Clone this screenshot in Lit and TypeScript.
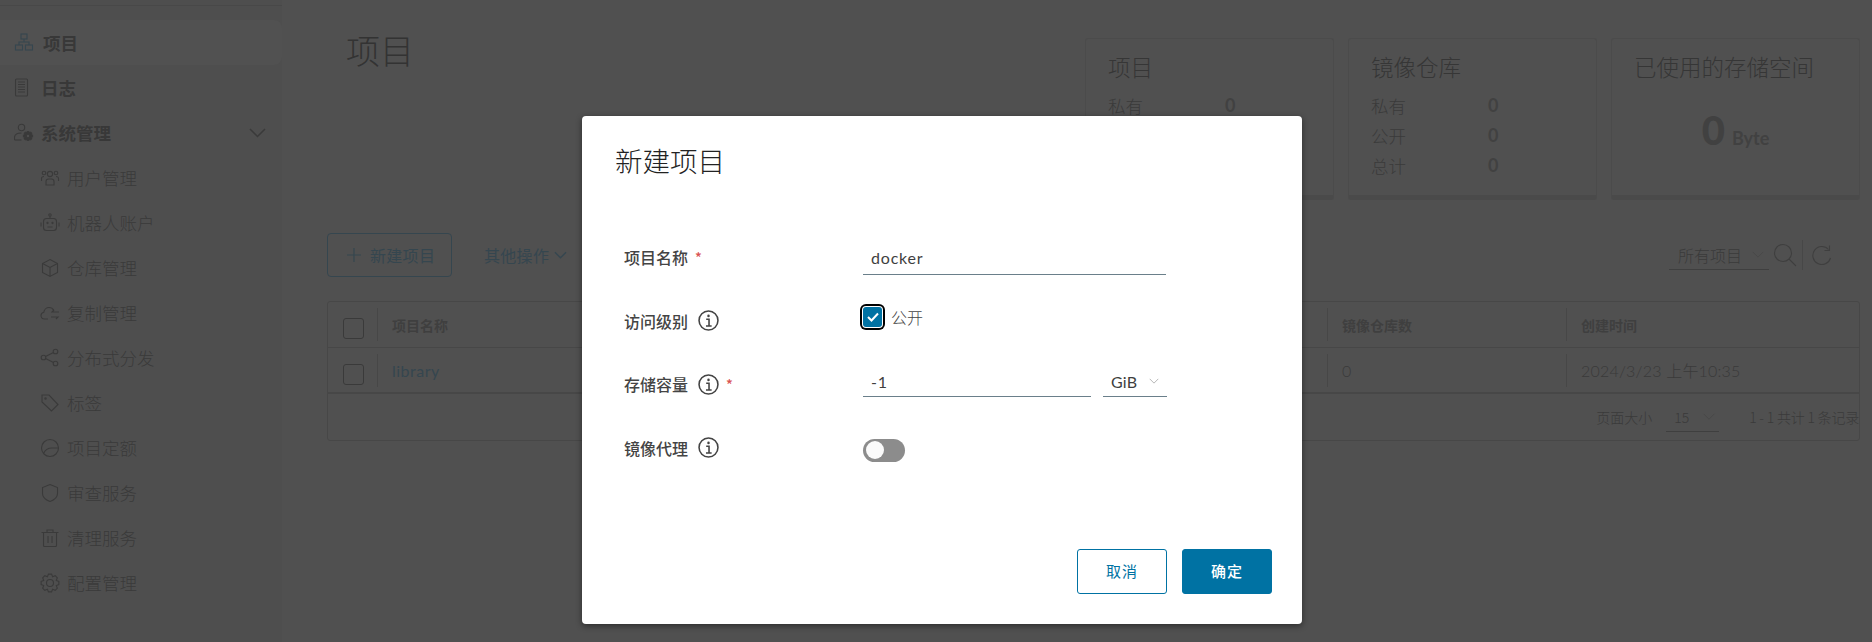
import { LitElement, css, html, svg } from 'lit';
import { customElement } from 'lit/decorators.js';

// gear outline, used by the admin and config icons
function gearPath(cx: number, cy: number, outer: number, inner: number, teeth: number) {
    let d = '';
    const step = (Math.PI * 2) / teeth;
    for (let i = 0; i < teeth; i++) {
        const a = i * step;
        const pts = [
            [inner, a - step * 0.5],
            [outer, a - step * 0.22],
            [outer, a + step * 0.22],
        ];
        for (const [r, t] of pts) {
            const x = (cx + r * Math.cos(t)).toFixed(2);
            const y = (cy + r * Math.sin(t)).toFixed(2);
            d += (d ? 'L' : 'M') + x + ' ' + y;
        }
    }
    return d + 'Z';
}

const ICONS: Record<string, unknown> = {
    project: svg`<rect x="7" y="1" width="6" height="5"/><rect x="1.5" y="12" width="7" height="5"/><rect x="11.5" y="12" width="7" height="5"/><path d="M10 6v3M5 12V9h10v3"/>`,
    log: svg`<rect x="1.5" y="1" width="12" height="17" rx="1"/><path d="M4 4h7M4 6.5h7M4 9h7M4 11.5h7M4 14h7"/>`,
    admin: svg`<circle cx="7.5" cy="4.5" r="3.2"/><path d="M0.5 17v-2.5c0-3 3-4.5 7-4.5"/><path d="M0.5 17h7"/><path d="${gearPath(14, 13, 4.6, 3.2, 8)}" fill="currentColor"/><circle cx="14" cy="13" r="1.2" fill="#4e4e4e" stroke="none"/>`,
    users: svg`<circle cx="10" cy="6" r="2.6"/><path d="M6 17v-3.5c0-1.5 1-2.5 2.5-2.5h3c1.5 0 2.5 1 2.5 2.5V17z"/><circle cx="4" cy="5" r="1.8"/><circle cx="16" cy="5" r="1.8"/><path d="M1.5 13v-2.5C1.5 9 2.5 8.5 4 8.5M18.5 13v-2.5C18.5 9 17.5 8.5 16 8.5"/>`,
    robot: svg`<circle cx="10" cy="2" r="1.2"/><path d="M10 3.2V5.5"/><rect x="3.5" y="5.5" width="13" height="12" rx="3"/><path d="M7.5 14h5M1 9.5v4M19 9.5v4"/><circle cx="7.5" cy="10" r=".6"/><circle cx="12.5" cy="10" r=".6"/>`,
    box: svg`<path d="M10 1.5l7.5 4v9L10 18.5l-7.5-4v-9zM2.5 5.5L10 9.5l7.5-4M10 9.5v9"/>`,
    cloud: svg`<path d="M8 16H4.5C2.5 16 1 14.5 1 12.5 1 10.8 2.2 9.5 3.8 9.2 4.2 6.5 6.5 4.5 9 4.5c2 0 3.8 1 4.7 2.8"/><path d="M19 9h-7l2-2M11 14h7l-2 2"/>`,
    share: svg`<circle cx="15.5" cy="3.5" r="2.3"/><circle cx="3.5" cy="9.5" r="2.3"/><circle cx="15.5" cy="15.5" r="2.3"/><path d="M5.5 8.5l8-4M5.5 10.5l8 4"/>`,
    tag: svg`<path d="M2 2h7l9 9.5-6.5 6.5L2 9z"/><circle cx="5.5" cy="5.5" r=".7"/>`,
    quota: svg`<circle cx="10" cy="10" r="8.5"/><path d="M3.5 15.5C5 12 8 10 12 10h6"/>`,
    shield: svg`<path d="M10 1.5l7.5 3v6c0 4-3.5 6.5-7.5 8-4-1.5-7.5-4-7.5-8v-6z"/>`,
    trash: svg`<path d="M1.5 4.5h17M7 4.5V2h6v2.5M3.5 4.5V17.5a1 1 0 0 0 1 1h11a1 1 0 0 0 1-1V4.5M8 8v7M12 8v7"/>`,
    gear: svg`<path d="${gearPath(10, 10, 9, 6.8, 8)}"/><circle cx="10" cy="10" r="3.5"/>`,
};

const CHILDREN = [
    ['users', '用户管理'],
    ['robot', '机器人账户'],
    ['box', '仓库管理'],
    ['cloud', '复制管理'],
    ['share', '分布式分发'],
    ['tag', '标签'],
    ['quota', '项目定额'],
    ['shield', '审查服务'],
    ['trash', '清理服务'],
    ['gear', '配置管理'],
];

const infoIcon = html`<svg class="info" viewBox="0 0 20 20"><circle cx="10" cy="10" r="9"/><circle cx="10" cy="5.6" r="1.2" class="dot"/><path d="M7.8 8.8H10.5V15M7.6 15.2h5.4"/></svg>`;

const chevron = () => html`<svg viewBox="0 0 14 8"><path d="M1 1l6 6 6-6"/></svg>`;

@customElement('app-root')
export class AppRoot extends LitElement {
    static styles = css`
    :host {
        display: block;
        position: relative;
        width: 1872px;
        height: 642px;
        overflow: hidden;
        background: #505050;
        color: #3a3a3a;
        font-family: "Noto Sans CJK SC", "Lato", sans-serif;
        font-weight: 300;
        --latin: "Lato", "Noto Sans CJK SC", sans-serif;
        --line: #474747;
        --teal: #35464f;
    }

    .page { display: flex; height: 642px; }

    /* sidebar */
    .side { width: 282px; flex: none; background: #4e4e4e; }
    .side-rule { height: 1px; margin: 5px 0 14px; background: #484848; }
    .nav {
        display: flex;
        align-items: center;
        height: 45px;
        font-size: 17.5px;
        white-space: nowrap;
        color: #3a3a3a;
    }
    .nav svg { width: 20px; height: 20px; flex: none; fill: none; stroke: currentColor; stroke-width: 1.1; }
    .nav.top { padding-left: 14px; gap: 7px; font-weight: 700; color: #383838; }
    .nav.top svg { color: #3a3a3a; }
    .nav.sub { padding-left: 40px; gap: 7px; }
    .nav.active { background: #515151; border-radius: 0 8px 8px 0; }
    .nav.active svg { color: var(--teal); }
    .nav.active span { margin-left: 2px; }
    .nav .toggle { width: 17px; height: 10px; margin-left: auto; margin-right: 16px; stroke-width: 1.5; }

    /* main */
    .main { flex: 1; min-width: 0; padding: 30px 12px 0 45px; }
    .head { display: flex; justify-content: space-between; align-items: flex-start; height: 203px; }
    .title { margin-left: 19px; font-size: 34px; line-height: 40px; color: #333; }
    .cards { display: flex; gap: 14px; margin-top: 8px; }
    .card {
        width: 249px;
        height: 162px;
        box-sizing: border-box;
        padding: 12px 22px 0;
        border: 1px solid #4b4b4b;
        border-bottom: 5px solid #4a4a4a;
        border-radius: 3px;
    }
    .card h3 { margin: 0 0 9px; font-size: 22.5px; line-height: 30px; font-weight: 300; color: #363636; }
    .stat { display: flex; height: 30px; align-items: center; font-size: 17.5px; }
    .stat span { width: 117px; }
    .stat b { font-family: var(--latin); font-weight: 700; font-size: 18px; color: #414141; }
    .used { display: flex; justify-content: center; align-items: baseline; gap: 7px; margin-top: 27px; font-family: var(--latin); font-weight: 700; color: #414141; }
    .used b { font-size: 40px; line-height: 44px; }
    .used span { font-size: 18px; }

    .tools { display: flex; align-items: center; height: 44px; padding-right: 28px; }
    .add {
        display: flex;
        align-items: center;
        gap: 9px;
        box-sizing: border-box;
        width: 125px;
        height: 44px;
        padding-left: 19px;
        border: 1px solid var(--teal);
        border-radius: 4px;
        font-size: 16px;
        font-weight: 400;
        letter-spacing: .3px;
        color: var(--teal);
    }
    .add svg { width: 14px; height: 14px; fill: none; stroke: currentColor; stroke-width: 1.2; }
    .more { display: flex; align-items: center; gap: 5px; margin-left: 32px; font-size: 16px; font-weight: 400; letter-spacing: .3px; color: var(--teal); }
    .more svg { width: 13px; height: 8px; fill: none; stroke: currentColor; stroke-width: 1.5; }
    .filter { display: flex; align-items: center; margin-left: auto; }
    .pick {
        display: flex;
        align-items: center;
        box-sizing: border-box;
        width: 100px;
        height: 30px;
        padding-left: 9px;
        border-bottom: 1px solid #3f3f3f;
        font-size: 16px;
    }
    .pick svg { width: 12px; height: 7px; margin-left: 10px; fill: none; stroke: #474747; }
    .search { width: 24px; height: 24px; margin-left: 4px; fill: none; stroke: #3f3f3f; stroke-width: 1.1; }
    .vbar { width: 1px; height: 30px; margin: 0 9px 0 5px; background: #474747; }
    .refresh { width: 20px; height: 20px; fill: none; stroke: #3f3f3f; stroke-width: 1.1; }

    .table { margin-top: 24px; border: 1px solid var(--line); border-radius: 3px; }
    .tr { display: grid; grid-template-columns: 49px 950px 239px 1fr; height: 46px; align-items: center; border-bottom: 1px solid var(--line); box-sizing: border-box; }
    .tr.body { border-bottom-width: 2px; }
    .tr > div { display: flex; align-items: center; height: 33px; padding-left: 14px; border-left: 1px solid var(--line); }
    .tr > .check { padding-left: 15px; border-left: 0; }
    .tr.hd { font-size: 14px; font-weight: 700; color: #3f3f3f; }
    .tr.body { font-size: 16px; }
    .box { width: 19px; height: 19px; margin-top: 8px; border: 1px solid #3a3a3a; border-radius: 3px; }
    .lib { font-family: var(--latin); font-weight: 400; letter-spacing: .5px; color: var(--teal); }
    .num { font-family: var(--latin); letter-spacing: .2px; white-space: pre; }
    .foot { display: flex; justify-content: flex-end; align-items: center; height: 46px; font-size: 14px; }
    .size { display: flex; align-items: center; box-sizing: border-box; width: 53px; height: 30px; margin: 0 30px 0 14px; padding-left: 8px; border-bottom: 1px solid #3f3f3f; }
    .size svg { width: 14px; height: 7px; margin-left: 13px; fill: none; stroke: #474747; }
    .records { letter-spacing: -.2px; white-space: pre; }

    /* dialog */
    .modal {
        position: absolute;
        left: 582px;
        top: 116px;
        width: 720px;
        height: 508px;
        box-sizing: border-box;
        display: flex;
        flex-direction: column;
        padding: 24px 30px 30px 33px;
        background: #fff;
        border-radius: 4px;
        box-shadow: 0 2px 6px rgba(0, 0, 0, .45);
        color: #444;
    }
    .modal h2 { margin: 0 0 45px; font-size: 27.5px; line-height: 40px; font-weight: 300; color: #222; }
    .row { display: grid; grid-template-columns: 239px 1fr; align-items: center; height: 63.7px; margin-left: 9px; }
    .label { display: flex; align-items: center; font-size: 16px; font-weight: 500; color: #444; }
    .label .info { margin-left: 10px; }
    .star { margin-left: 7px; font-size: 14px; color: #d9534f; }
    .info { width: 21px; height: 21px; fill: none; stroke: #444; stroke-width: 1.5; }
    .info .dot { fill: #444; stroke: none; }
    .field {
        box-sizing: border-box;
        padding-left: 8px;
        border-bottom: 1px solid #6a7f8a;
        font-family: var(--latin);
        font-size: 16px;
        font-weight: 400;
        letter-spacing: .8px;
        color: #3f3f3f;
    }
    .name { display: flex; align-items: center; width: 303px; height: 34px; margin-top: 2px; }
    .public { display: flex; align-items: center; gap: 9px; margin-top: -7px; font-size: 16px; }
    .tick {
        display: flex;
        align-items: center;
        justify-content: center;
        width: 19px;
        height: 20px;
        border-radius: 3px;
        background: #0072a3;
        box-shadow: 0 0 0 1px #fff, 0 0 0 3px #000;
    }
    .tick svg { width: 12px; height: 10px; fill: none; stroke: #fff; stroke-width: 2; }
    .quota { display: flex; gap: 12px; }
    .quota .field { display: flex; align-items: center; height: 26px; padding-bottom: 5px; }
    .quota .amount { width: 228px; }
    .quota .unit { width: 64px; letter-spacing: .2px; }
    .quota .unit svg { width: 10px; height: 6px; margin-left: 12px; fill: none; stroke: #999; }
    .switch {
        display: flex;
        align-items: center;
        box-sizing: border-box;
        width: 42px;
        height: 23px;
        margin-top: 5px;
        padding-left: 3px;
        border-radius: 12px;
        background: #8c8c8c;
    }
    .switch i { width: 18px; height: 18px; border-radius: 50%; background: #fafafa; }
    .actions { display: flex; justify-content: flex-end; gap: 15px; margin-top: auto; }
    .btn {
        display: flex;
        align-items: center;
        justify-content: center;
        box-sizing: border-box;
        width: 90px;
        height: 45px;
        padding-bottom: 2px;
        border: 1px solid #0072a3;
        border-radius: 3px;
        font-size: 15px;
        font-weight: 400;
        letter-spacing: 1px;
        color: #0072a3;
    }
    .btn.primary { background: #0072a3; color: #fff; font-weight: 500; }
    `;

    navItem(icon: string, label: string, cls: string) {
        return html`<div class="nav ${cls}"><svg viewBox="0 0 20 20">${ICONS[icon]}</svg><span>${label}</span></div>`;
    }

    render() {
        return html`
        <div class="page">
            <aside class="side">
                <div class="side-rule"></div>
                ${this.navItem('project', '项目', 'top active')}
                ${this.navItem('log', '日志', 'top')}
                <div class="nav top">
                    <svg viewBox="0 0 20 20">${ICONS.admin}</svg><span>系统管理</span>
                    <svg class="toggle" viewBox="0 0 17 10"><path d="M1 1l7.5 7.5L16 1"/></svg>
                </div>
                ${CHILDREN.map(([icon, label]) => this.navItem(icon, label, 'sub'))}
            </aside>

            <main class="main">
                <div class="head">
                    <div class="title">项目</div>
                    <div class="cards">
                        <div class="card">
                            <h3>项目</h3>
                            <div class="stat"><span>私有</span><b>0</b></div>
                            <div class="stat"><span>公开</span><b>0</b></div>
                            <div class="stat"><span>总计</span><b>0</b></div>
                        </div>
                        <div class="card">
                            <h3>镜像仓库</h3>
                            <div class="stat"><span>私有</span><b>0</b></div>
                            <div class="stat"><span>公开</span><b>0</b></div>
                            <div class="stat"><span>总计</span><b>0</b></div>
                        </div>
                        <div class="card">
                            <h3>已使用的存储空间</h3>
                            <div class="used"><b>0</b><span>Byte</span></div>
                        </div>
                    </div>
                </div>

                <div class="tools">
                    <div class="add"><svg viewBox="0 0 14 14"><path d="M7 0v14M0 7h14"/></svg>新建项目</div>
                    <div class="more">其他操作${chevron()}</div>
                    <div class="filter">
                        <div class="pick">所有项目${chevron()}</div>
                        <svg class="search" viewBox="0 0 24 24"><circle cx="10" cy="10" r="8.5"/><path d="M16 16l7 7"/></svg>
                        <div class="vbar"></div>
                        <svg class="refresh" viewBox="0 0 20 20"><path d="M16.5 4.5A9 9 0 1 0 18.5 13"/><path d="M17.5 0.5V5.5H12.5"/></svg>
                    </div>
                </div>

                <div class="table">
                    <div class="tr hd">
                        <div class="check"><span class="box"></span></div>
                        <div>项目名称</div>
                        <div>镜像仓库数</div>
                        <div>创建时间</div>
                    </div>
                    <div class="tr body">
                        <div class="check"><span class="box"></span></div>
                        <div class="lib">library</div>
                        <div class="num">0</div>
                        <div class="num">2024/3/23 上午10:35</div>
                    </div>
                    <div class="foot">
                        页面大小
                        <div class="size">15${chevron()}</div>
                        <span class="records">1 - 1 共计 1 条记录</span>
                    </div>
                </div>
            </main>
        </div>

        <div class="modal">
            <h2>新建项目</h2>
            <div class="row">
                <div class="label">项目名称<span class="star">*</span></div>
                <div class="field name">docker</div>
            </div>
            <div class="row">
                <div class="label">访问级别${infoIcon}</div>
                <div class="public">
                    <span class="tick"><svg viewBox="0 0 12 10"><path d="M1 5l3.5 3.5L11 1.5"/></svg></span>公开
                </div>
            </div>
            <div class="row">
                <div class="label">存储容量${infoIcon}<span class="star">*</span></div>
                <div class="quota">
                    <div class="field amount">-1</div>
                    <div class="field unit">GiB${chevron()}</div>
                </div>
            </div>
            <div class="row">
                <div class="label">镜像代理${infoIcon}</div>
                <div class="switch"><i></i></div>
            </div>
            <div class="actions">
                <div class="btn">取消</div>
                <div class="btn primary">确定</div>
            </div>
        </div>
        `;
    }
}
